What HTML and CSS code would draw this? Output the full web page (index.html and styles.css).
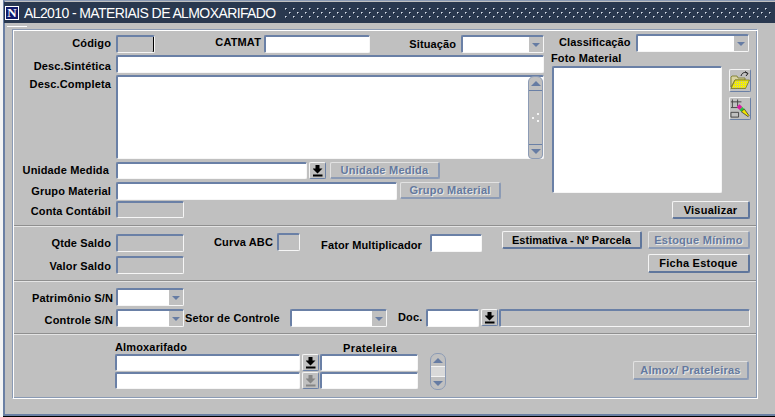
FILE: index.html
```html
<!DOCTYPE html>
<html lang="pt-BR">
<head>
    <meta charset="UTF-8">
    <title>AL2010 - Materiais de Almoxarifado</title>
    <link rel="stylesheet" href="styles.css">
</head>
<body>
    <div class="window">
        <div class="titlebar">
            <span class="logo">N</span>
            <span class="title">AL2010 - MATERIAIS DE ALMOXARIFADO</span>
            <svg class="dots" width="486" height="12">
                <defs>
                    <pattern id="dot" width="8" height="8" patternUnits="userSpaceOnUse">
                        <rect x="0" y="0" width="2" height="2" fill="#8d99ad"/>
                        <rect x="0" y="0" width="1" height="1" fill="#dfe3ea"/>
                        <rect x="1" y="1" width="1" height="1" fill="#0f1a2c"/>
                        <rect x="4" y="4" width="2" height="2" fill="#8d99ad"/>
                        <rect x="4" y="4" width="1" height="1" fill="#dfe3ea"/>
                        <rect x="5" y="5" width="1" height="1" fill="#0f1a2c"/>
                    </pattern>
                </defs>
                <rect width="486" height="12" fill="url(#dot)"/>
            </svg>
        </div>
        <div class="menu-tick"></div>

        <div class="panel">
            <!-- dados gerais -->
            <div class="section main-section">
                <div class="main-left">
                    <div class="row">
                        <label class="lbl">Código</label>
                        <div class="field off w-codigo"></div>
                        <label class="lbl-catmat">CATMAT</label>
                        <input class="field w-catmat" type="text">
                        <label class="lbl-situacao">Situação</label>
                        <div class="field combo w-situacao"><span class="combo-btn"><i class="arrow-down"></i></span></div>
                    </div>
                    <div class="row">
                        <label class="lbl pad-5">Desc.Sintética</label>
                        <input class="field w-desc" type="text">
                    </div>
                    <div class="row">
                        <label class="lbl pad-3">Desc.Completa</label>
                        <div class="field w-desc textarea">
                            <div class="scrollbar">
                                <span class="scroll-btn"><i class="arrow-up"></i></span>
                                <span class="grip">
                                    <svg width="8" height="10"><path d="M5 0h2v2H5zM0 4h2v2H0zM5 7h2v2H5z" fill="#f4f4f4"/></svg>
                                </span>
                                <span class="scroll-btn"><i class="arrow-down"></i></span>
                            </div>
                        </div>
                    </div>
                    <div class="row">
                        <label class="lbl lbl-unidade">Unidade Medida</label>
                        <input class="field w-unidade short" type="text">
                        <button class="lov"><i class="lov-arrow"></i></button>
                        <button class="btn off-btn w-btn-unidade">Unidade Medida</button>
                    </div>
                    <div class="row">
                        <label class="lbl pad-3">Grupo Material</label>
                        <input class="field w-grupo" type="text">
                        <button class="btn off-btn w-btn-grupo">Grupo Material</button>
                    </div>
                    <div class="row">
                        <label class="lbl pad-4">Conta Contábil</label>
                        <div class="field off short w-saldo"></div>
                    </div>
                </div>

                <div class="main-right">
                    <div class="row-class">
                        <label class="lbl-class">Classificação</label>
                        <div class="field combo w-class"><span class="combo-btn"><i class="arrow-down"></i></span></div>
                    </div>
                    <div class="foto-label">Foto Material</div>
                    <div class="foto-row">
                        <div class="field foto"></div>
                        <div class="tools">
                            <button class="tool">
                                <svg width="20" height="19" viewBox="0 0 20 19">
                                    <defs>
                                        <pattern id="dither" width="2" height="2" patternUnits="userSpaceOnUse">
                                            <rect width="2" height="2" fill="#f6f000"/>
                                            <rect width="1" height="1" fill="#b9b9a0"/>
                                        </pattern>
                                    </defs>
                                    <path d="M11 5 C12 1.500 15 0.500 17.500 2.500" fill="none" stroke="#222" stroke-width="1"/>
                                    <path d="M15 0.500 L18 2.500 L16 5" fill="none" stroke="#222" stroke-width="1"/>
                                    <path d="M1 16 V6 L2 5 H7 L8 7 H15 V9 H5 L1 16 Z" fill="#d8d2a0" stroke="#77771e" stroke-width=".8"/>
                                    <path d="M1 17.500 L5 9 H19.500 L15.500 17.500 Z" fill="url(#dither)" stroke="#77771e" stroke-width=".8"/>
                                </svg>
                            </button>
                            <button class="tool">
                                <svg width="21" height="20" viewBox="0 0 21 20">
                                    <path d="M1 2.500 H12 M1 8.500 H9 M1 13.500 H9 V18.500 H1 Z M2.500 0 V8 M8 0 V7" fill="none" stroke="#444" stroke-width="1"/>
                                    <path d="M7 8 L10 5 L13 8 L10 11 Z" fill="#d81fa0"/>
                                    <path d="M10 11 L13 8 L15 10 L12 13 Z" fill="#27c23a"/>
                                    <path d="M12 13 L15 10 L20 17 L19 18 Z" fill="#f2e600" stroke="#222" stroke-width=".7"/>
                                </svg>
                            </button>
                        </div>
                    </div>
                    <button class="btn w-visualizar">Visualizar</button>
                </div>
            </div>

            <!-- saldos -->
            <div class="section saldo-section">
                <div class="saldo-left">
                    <div class="row-saldo">
                        <label class="lbl pad-3">Qtde Saldo</label>
                        <div class="field off w-saldo"></div>
                        <label class="lbl-curva">Curva ABC</label>
                        <div class="field off w-curva"></div>
                        <label class="lbl-fator">Fator Multiplicador</label>
                        <input class="field w-fator" type="text">
                    </div>
                    <div class="row-saldo">
                        <label class="lbl pad-4">Valor Saldo</label>
                        <div class="field off w-saldo"></div>
                    </div>
                </div>
                <div class="saldo-btns">
                    <button class="btn w-estimativa">Estimativa - Nº Parcela</button>
                    <button class="btn off-btn w-estoque">Estoque Mínimo</button>
                    <button class="btn w-estoque tall">Ficha Estoque</button>
                </div>
            </div>

            <!-- controle -->
            <div class="section controle-section">
                <div class="row-ctrl">
                    <label class="lbl lbl-sn pad-4">Patrimônio S/N</label>
                    <div class="field combo w-saldo"><span class="combo-btn"><i class="arrow-down"></i></span></div>
                </div>
                <div class="row-ctrl">
                    <label class="lbl lbl-sn pad-5">Controle S/N</label>
                    <div class="field combo w-saldo"><span class="combo-btn"><i class="arrow-down"></i></span></div>
                    <label class="lbl-setor">Setor de Controle</label>
                    <div class="field combo w-setor"><span class="combo-btn"><i class="arrow-down"></i></span></div>
                    <label class="lbl-doc">Doc.</label>
                    <input class="field w-doc" type="text">
                    <button class="lov lov-doc"><i class="lov-arrow"></i></button>
                    <div class="field off w-docdesc"></div>
                </div>
            </div>

            <!-- almoxarifado -->
            <div class="section almox-section">
                <div class="almox-table">
                    <div class="almox-head">
                        <span class="head-almox">Almoxarifado</span>
                        <span class="head-prat">Prateleira</span>
                    </div>
                    <div class="almox-row">
                        <input class="field w-almox" type="text">
                        <button class="lov lov-almox"><i class="lov-arrow"></i></button>
                        <input class="field w-prat" type="text">
                    </div>
                    <div class="almox-row">
                        <input class="field w-almox" type="text">
                        <button class="lov lov-almox lov-off"><i class="lov-arrow"></i></button>
                        <input class="field w-prat" type="text">
                    </div>
                </div>
                <div class="spinner">
                    <span class="spin-btn"><i class="arrow-up"></i></span>
                    <span class="spin-mid"></span>
                    <span class="spin-btn"><i class="arrow-down"></i></span>
                </div>
                <button class="btn off-btn w-almox-btn">Almox/ Prateleiras</button>
            </div>
        </div>
    </div>
</body>
</html>
```

FILE: styles.css
```css
* {
    margin: 0;
    padding: 0;
    box-sizing: border-box;
}

html, body {
    width: 775px;
    height: 417px;
    overflow: hidden;
}

body {
    background: #f4f4f4;
    font-family: "Liberation Sans", Arial, sans-serif;
    font-size: 11px;
    font-weight: bold;
    color: #000;
}

label, .foto-label, .head-almox, .head-prat {
    letter-spacing: 0.15px;
    white-space: nowrap;
}

.window {
    width: 772px;
    height: 416px;
    margin-left: 3px;
    padding-top: 1px;
    background: #c0c0c0;
    border-left: 2px solid #6a7fa3;
    border-top: 1px solid #8b9ab4;
    border-bottom: 2px solid #6a7fa3;
    box-shadow: 0 1px 0 #000;
}

.titlebar {
    display: flex;
    align-items: center;
    height: 21px;
    margin-left: -1px;
    padding-left: 1px;
    background: #29384f;
}

.logo {
    width: 14px;
    height: 14px;
    background: #101a6b;
    border: 1px solid #fff;
    color: #fff;
    font-family: "Liberation Serif", serif;
    font-size: 13px;
    line-height: 12px;
    text-align: center;
}

.title {
    margin-left: 5px;
    width: 261px;
    color: #fff;
    font-size: 14px;
    font-weight: normal;
    letter-spacing: -0.6px;
    white-space: nowrap;
}

.dots {
    display: block;
    margin-top: 3px;
}

.menu-tick {
    width: 20px;
    height: 1px;
    margin: 3px 0 0 2px;
    background: #fff;
}

.panel {
    width: 746px;
    height: 370px;
    margin: 2px 0 0 7px;
    border: 1px solid;
    border-color: #8a9ab4 #fff #fff #8a9ab4;
    box-shadow: inset 1px 1px 0 #fff, inset -1px -1px 0 #8a9ab4;
}

.section {
    margin: 0 1px;
    border-bottom: 1px solid #8f8f8f;
    box-shadow: 0 1px 0 #e4e4e4;
}

/* campos */
.field {
    display: block;
    height: 18px;
    background: #fff;
    border: 1px solid;
    border-width: 2px 1px 1px 2px;
    border-color: #6a80a6 #f6f6f6 #f6f6f6 #6a80a6;
    border-radius: 2px;
    outline: none;
    position: relative;
    flex: none;
}

.off {
    background: #c0c0c0;
}

.short {
    height: 17px;
}

.combo-btn {
    display: flex;
    align-items: center;
    justify-content: center;
    float: right;
    width: 14px;
    height: 15px;
    background: #c0c0c0;
}

.arrow-down, .arrow-up {
    display: block;
    width: 0;
    height: 0;
    border-left: 4px solid transparent;
    border-right: 4px solid transparent;
}

.arrow-down {
    border-top: 4px solid #667ca3;
}

.arrow-up {
    border-bottom: 4px solid #667ca3;
}

.scroll-btn i, .spin-btn i {
    border-left-width: 5px;
    border-right-width: 5px;
    border-top-width: 5px;
    border-bottom-width: 5px;
}

.scroll-btn .arrow-up, .spin-btn .arrow-up {
    border-top: 0;
}

.scroll-btn .arrow-down, .spin-btn .arrow-down {
    border-bottom: 0;
}

.lov {
    display: flex;
    align-items: center;
    justify-content: center;
    flex: none;
    width: 17px;
    height: 17px;
    margin: 0 3px 0 2px;
    background: #c0c0c0;
    border: 1px solid;
    border-color: #f4f4f4 #6a80a6 #6a80a6 #f4f4f4;
    border-radius: 2px;
}

.lov-arrow {
    display: block;
    width: 10px;
    height: 12px;
    background: #000;
    clip-path: polygon(3px 0, 7px 0, 7px 4px, 10px 4px, 5px 9px, 0 4px, 3px 4px, 3px 0, 0 10px, 10px 10px, 10px 12px, 0 12px, 0 10px, 3px 0);
}

.lov-off .lov-arrow {
    background: #858585;
}

.btn {
    display: block;
    flex: none;
    font-family: "Liberation Sans", Arial, sans-serif;
    font-size: 11px;
    font-weight: bold;
    letter-spacing: 0.25px;
    color: #000;
    background: #c0c0c0;
    border: 1px solid;
    border-width: 1px 2px 2px 1px;
    border-color: #f4f4f4 #5f769c #5f769c #f4f4f4;
    border-radius: 2px;
    white-space: nowrap;
}

.off-btn {
    color: #64799e;
    text-shadow: 1px 1px 0 #e8e8e8;
    border-color: #e2e2e2 #8c9bb5 #8c9bb5 #e2e2e2;
}

/* secao principal */
.main-section {
    display: flex;
    height: 196px;
    padding-top: 5px;
}

.main-left {
    display: grid;
    grid-template-rows: 20px 20px 87px 20px 19px 17px;
    width: 537px;
}

.row {
    display: flex;
    align-items: flex-start;
}

.lbl {
    flex: none;
    width: 97px;
    margin-right: 5px;
    padding-top: 2px;
    text-align: right;
}

.pad-3 { padding-top: 3px; }
.pad-4 { padding-top: 4px; }
.pad-5 { padding-top: 5px; }

.lbl-unidade {
    width: 95px;
    margin-right: 7px;
}

.lbl-sn {
    width: 99px;
    margin-right: 3px;
}

.w-codigo { width: 39px; box-shadow: inset -1px 0 0 #000; }
.w-catmat { width: 106px; }
.w-situacao { width: 83px; }
.w-desc { width: 428px; }
.w-unidade { width: 191px; }
.w-grupo { width: 281px; }
.w-saldo { width: 68px; }
.w-curva { width: 23px; margin-top: -1px; }
.w-fator { width: 52px; }
.w-setor { width: 97px; }
.w-doc { width: 53px; }
.w-docdesc { width: 251px; }
.w-almox { width: 185px; height: 17px; }
.w-prat { width: 98px; height: 17px; }
.w-class { width: 113px; }

.lbl-catmat {
    width: 106px;
    margin-right: 3px;
    padding-top: 1px;
    text-align: right;
}

.lbl-situacao {
    width: 86px;
    margin-right: 5px;
    padding-top: 3px;
    text-align: right;
    letter-spacing: 0.1px;
}

.textarea {
    height: 84px;
}

.scrollbar {
    display: flex;
    flex-direction: column;
    position: absolute;
    top: -1px;
    right: 0;
    width: 15px;
    height: 83px;
    background: #c0c0c0;
    border: 1px solid #8c9bb5;
    border-radius: 6px 6px 4px 4px;
}

.scroll-btn {
    display: flex;
    align-items: center;
    justify-content: center;
    flex: none;
    height: 14px;
    border-bottom: 1px solid #6a80a6;
}

.scroll-btn:last-child {
    border-bottom: 0;
    border-top: 1px solid #6a80a6;
}

.grip {
    display: flex;
    flex: 1;
    align-items: center;
    justify-content: center;
}

.w-btn-unidade {
    width: 110px;
    height: 17px;
    margin-left: 1px;
}

.w-btn-grupo {
    width: 101px;
    height: 17px;
    margin-left: 3px;
}

/* coluna direita */
.main-right {
    width: 200px;
}

.row-class {
    display: flex;
    margin-top: -1px;
    margin-left: 8px;
}

.lbl-class {
    width: 71px;
    margin-right: 6px;
    padding-top: 2px;
    letter-spacing: 0.1px;
}

.foto-label {
    margin-top: 0;
    height: 14px;
    line-height: 13px;
}

.foto-row {
    display: flex;
}

.foto {
    width: 170px;
    height: 127px;
    margin-left: 1px;
}

.tools {
    display: flex;
    flex-direction: column;
    gap: 5px;
    margin: 3px 0 0 7px;
}

.tool {
    display: flex;
    align-items: center;
    justify-content: center;
    width: 22px;
    height: 23px;
    background: #c0c0c0;
    border: 1px solid;
    border-color: #f4f4f4 #6a80a6 #6a80a6 #f4f4f4;
    border-radius: 2px;
}

.w-visualizar {
    width: 78px;
    height: 18px;
    margin: 8px 0 0 121px;
}

/* saldos */
.saldo-section {
    display: flex;
    height: 55px;
    padding-top: 5px;
}

.saldo-left {
    width: 488px;
    padding-top: 3px;
}

.row-saldo {
    display: flex;
    height: 22px;
    align-items: flex-start;
}

.lbl-curva {
    width: 93px;
    padding: 2px 4px 0 0;
    text-align: right;
}

.lbl-fator {
    width: 122px;
    margin-right: 8px;
    padding-top: 5px;
    text-align: right;
    letter-spacing: 0.1px;
}

.saldo-btns {
    display: grid;
    grid-template-columns: 140px 102px;
    column-gap: 6px;
    row-gap: 5px;
    align-content: start;
}

.w-estimativa, .w-estoque {
    height: 18px;
}

.w-estimativa {
    letter-spacing: 0;
}

.w-estoque.tall {
    grid-column: 2;
    height: 19px;
}

/* controle */
.controle-section {
    height: 53px;
    padding-top: 7px;
}

.row-ctrl {
    display: flex;
    align-items: flex-start;
    height: 21px;
}

.lbl-setor {
    width: 99px;
    margin-right: 7px;
    padding: 3px 0 0 1px;
}

.lbl-doc {
    width: 22px;
    margin: 0 6px 0 11px;
    padding-top: 2px;
}

.lov-doc {
    margin: 0 1px 0 2px;
}

/* almoxarifado */
.almox-section {
    display: flex;
    align-items: flex-start;
    height: 63px;
    padding: 6px 0 0 101px;
    border-bottom: 0;
    box-shadow: none;
}

.almox-table {
    width: 305px;
}

.almox-head {
    display: flex;
    height: 13px;
    line-height: 12px;
}

.head-almox {
    width: 228px;
    padding-top: 1px;
}

.head-prat {
    padding-top: 2px;
    letter-spacing: 0.4px;
}

.almox-row {
    display: flex;
    margin-top: 1px;
    height: 17px;
}

.lov-almox {
    width: 17px;
    margin: 0 1px 0 2px;
}

.spinner {
    display: flex;
    flex-direction: column;
    width: 16px;
    height: 37px;
    margin: 13px 0 0 10px;
    border: 1px solid #8c9bb5;
    border-radius: 7px;
}

.spin-btn {
    display: flex;
    align-items: center;
    justify-content: center;
    flex: none;
    height: 12px;
}

.spin-mid {
    flex: 1;
    background: #d9d9d9;
    border-top: 1px solid #f4f4f4;
    border-bottom: 1px solid #f4f4f4;
}

.w-almox-btn {
    width: 116px;
    height: 19px;
    margin: 21px 0 0 187px;
}
```
